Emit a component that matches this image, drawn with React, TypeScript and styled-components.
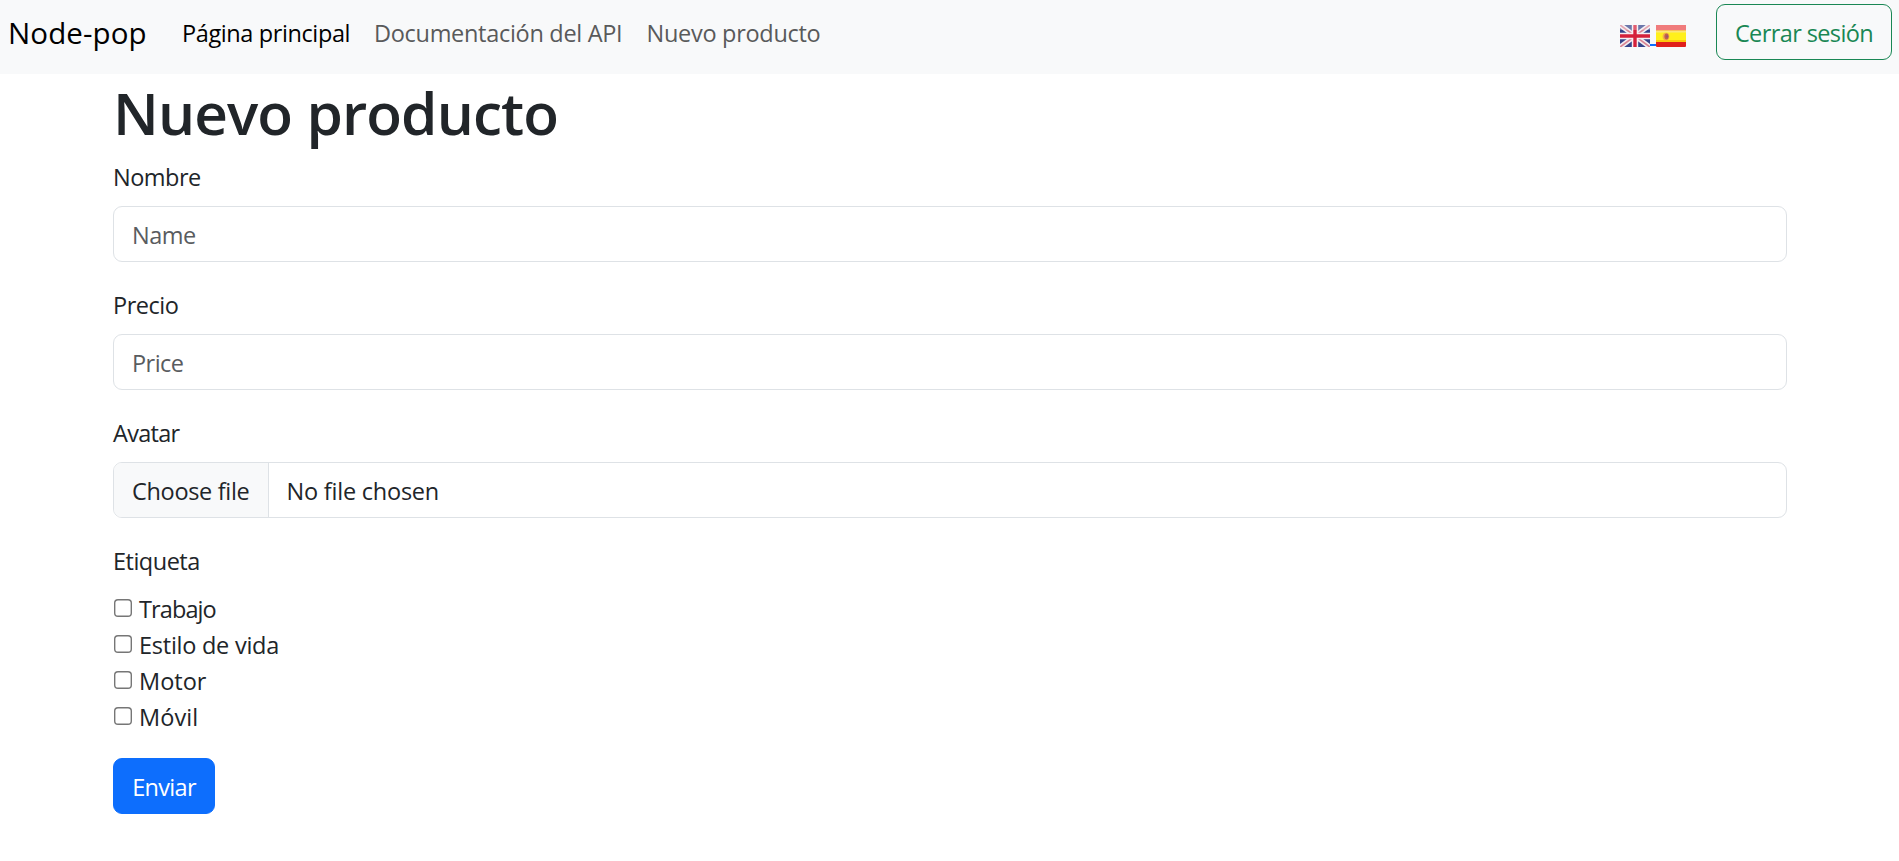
import React from 'react';
import styled, { createGlobalStyle } from 'styled-components';

const GlobalStyle = createGlobalStyle`
  *, *::before, *::after { box-sizing: border-box; }
  body {
    margin: 0;
    background: #fff;
    color: #212529;
    font-family: "Open Sans", "Noto Sans", sans-serif;
    font-size: 23.5px;
    line-height: 36px;
  }
`;

/* Each string carries its own tracking, in px. */
type Tracked = { $track?: number };

const Navbar = styled.nav`
  display: flex;
  align-items: center;
  height: 74px;
  padding: 0 7px 10px 8px;
  background: #f8f9fa;
`;

const Brand = styled.a`
  padding-top: 1px;
  margin-right: 24px;
  width: 150px;
  flex: none;
  color: #000;
  font-size: 29.5px;
  line-height: 45px;
  letter-spacing: 0.1px;
  text-decoration: none;
`;

const NavLinks = styled.div`
  display: flex;
  flex: 1;
`;

const NavLink = styled.a<Tracked & { $active?: boolean; $width: number }>`
  width: ${(p) => p.$width}px;
  padding-top: 2px;
  white-space: nowrap;
  color: ${(p) => (p.$active ? '#000' : '#595a5b')};
  letter-spacing: ${(p) => p.$track ?? 0}px;
  text-decoration: none;
`;

const Languages = styled.a`
  display: flex;
  align-items: flex-end;
  height: 22px;
  margin: 7px 30px 0 0;
`;

const Flag = styled.svg`
  display: block;
  width: 30px;
  height: 22px;
`;

const FlagGap = styled.span`
  width: 6px;
  height: 2px;
  margin-bottom: 1px;
  background: #0d6efd;
`;

const Button = styled.button<Tracked & { $outline?: boolean; $width: number }>`
  width: ${(p) => p.$width}px;
  height: 56px;
  padding: 2px 0 0;
  border: 1px solid ${(p) => (p.$outline ? '#198754' : '#0d6efd')};
  border-radius: 9px;
  background: ${(p) => (p.$outline ? 'transparent' : '#0d6efd')};
  color: ${(p) => (p.$outline ? '#198754' : '#fff')};
  font: inherit;
  letter-spacing: ${(p) => p.$track ?? 0}px;
  white-space: nowrap;
`;

const Container = styled.main`
  width: 1674px;
  margin-left: 113px;
`;

const Title = styled.h1`
  margin: 0 0 10px;
  padding-top: 2px;
  font-size: 58.5px;
  font-weight: 550;
  line-height: 72px;
  letter-spacing: -0.9px;
`;

const Field = styled.div`
  margin-bottom: 24px;
`;

const Label = styled.label<Tracked>`
  display: block;
  height: 36px;
  margin-bottom: 12px;
  padding-top: 1px;
  letter-spacing: ${(p) => p.$track ?? 0}px;
`;

const Input = styled.input<Tracked>`
  display: block;
  width: 100%;
  height: 56px;
  padding: 2px 18px 0;
  border: 1px solid #dee2e6;
  border-radius: 9px;
  background: #fff;
  color: #212529;
  font: inherit;
  letter-spacing: ${(p) => p.$track ?? 0}px;
  &::placeholder { color: #595c5f; opacity: 1; }
`;

const FilePicker = styled.label`
  display: flex;
  height: 56px;
  border: 1px solid #dee2e6;
  border-radius: 9px;
  overflow: hidden;
  line-height: 56px;
  input { display: none; }
`;

const FileButton = styled.span`
  width: 155px;
  padding-left: 18px;
  border-right: 1px solid #dee2e6;
  background: #f8f9fa;
  letter-spacing: -0.32px;
  white-space: nowrap;
`;

const FileName = styled.span`
  padding-left: 17.5px;
  letter-spacing: -0.22px;
`;

const Options = styled.div`
  margin: 0 0 24px;
`;

const Option = styled.label<Tracked>`
  display: flex;
  gap: 7px;
  height: 36px;
  padding-left: 1px;
  span {
    padding-top: 1px;
    letter-spacing: ${(p) => p.$track ?? 0}px;
  }
`;

const Checkbox = styled.input.attrs({ type: 'checkbox' })`
  appearance: none;
  width: 18px;
  height: 18px;
  margin: 9px 0 0;
  border-radius: 4px;
  background: #fff;
  box-shadow: inset 0 0 0 1.4px #767676;
  &:checked { background: #0d6efd; }
`;

function BritishFlag() {
  return (
    <Flag viewBox="0 0 30 22" aria-label="English">
      <rect width="30" height="22" rx="1" fill="#34438a" />
      <path d="M0 0 30 22M30 0 0 22" stroke="#f1edf2" strokeWidth="5" />
      <path d="M0 0 30 22M30 0 0 22" stroke="#d98594" strokeWidth="1.8" />
      <path d="M15 0V22M0 11H30" stroke="#f6eef2" strokeWidth="6.4" />
      <path d="M15 0V22M0 11H30" stroke="#d5203a" strokeWidth="3.4" />
      <rect width="30" height="5" fill="#fff" opacity=".28" />
    </Flag>
  );
}

function SpanishFlag() {
  return (
    <Flag viewBox="0 0 30 22" aria-label="Español">
      <rect width="30" height="22" rx="1" fill="#e0201b" />
      <rect width="30" height="5.5" fill="#f07c7c" />
      <rect y="5.5" width="30" height="11" fill="#fff01c" />
      <rect y="5.5" width="30" height="2" fill="#fbe678" />
      <rect y="15" width="30" height="2" fill="#fdc90c" />
      <ellipse cx="10" cy="11.5" rx="3.4" ry="3.8" fill="#eeb04c" />
      <ellipse cx="10.5" cy="11.5" rx="2.1" ry="2.9" fill="#c4604a" />
      <circle cx="11" cy="11.5" r="1.2" fill="#98586e" />
    </Flag>
  );
}

const options = [
  { label: 'Trabajo', track: -0.9 },
  { label: 'Estilo de vida', track: -0.25 },
  { label: 'Motor', track: 0 },
  { label: 'Móvil', track: 0.1 },
];

export default function App() {
  return (
    <>
      <GlobalStyle />
      <Navbar>
        <Brand>Node-pop</Brand>
        <NavLinks>
          <NavLink $active $width={192} $track={-0.39}>Página principal</NavLink>
          <NavLink $width={272.5} $track={-0.3}>Documentación del API</NavLink>
          <NavLink $width={190} $track={-0.29}>Nuevo producto</NavLink>
        </NavLinks>
        <Languages>
          <BritishFlag />
          <FlagGap />
          <SpanishFlag />
        </Languages>
        <Button $outline $width={176} $track={-0.6}>Cerrar sesión</Button>
      </Navbar>
      <Container>
        <Title>Nuevo producto</Title>
        <Field>
          <Label htmlFor="name" $track={-0.5}>Nombre</Label>
          <Input id="name" placeholder="Name" $track={-0.5} />
        </Field>
        <Field>
          <Label htmlFor="price" $track={-0.5}>Precio</Label>
          <Input id="price" placeholder="Price" $track={-0.55} />
        </Field>
        <Field>
          <Label as="div" $track={-0.7}>Avatar</Label>
          <FilePicker>
            <input type="file" />
            <FileButton>Choose file</FileButton>
            <FileName>No file chosen</FileName>
          </FilePicker>
        </Field>
        <Label as="div" $track={-0.5}>Etiqueta</Label>
        <Options>
          {options.map((o) => (
            <Option key={o.label} $track={o.track}>
              <Checkbox />
              <span>{o.label}</span>
            </Option>
          ))}
        </Options>
        <Button $width={102} $track={-0.7}>Enviar</Button>
      </Container>
    </>
  );
}
